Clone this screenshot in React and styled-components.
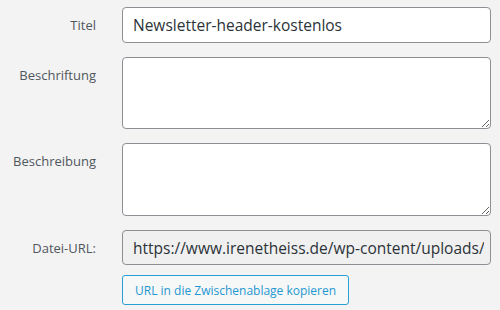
import React from "react";
import styled, { createGlobalStyle } from "styled-components";

const GlobalStyle = createGlobalStyle`
  * {
    box-sizing: border-box;
  }
  body {
    margin: 0;
    background: #f3f3f3;
    font-family: "Open Sans", "Noto Sans", Arial, sans-serif;
  }
`;

const Form = styled.form`
  display: grid;
  grid-template-columns: 96px 1fr;
  column-gap: 26px;
  row-gap: 14px;
  padding: 7px 9px 0 0;
`;

const Label = styled.label`
  text-align: right;
  font-size: 13px;
  color: #50575e;
  align-self: ${props => (props.top ? "start" : "center")};
  padding-top: ${props => (props.top ? "9px" : "0")};
`;

const TextInput = styled.input`
  width: 100%;
  height: ${props => (props.h || 36)}px;
  padding: ${props => (props.readOnly ? "0 6px 0 10px" : "0 10px")};
  font-family: inherit;
  font-size: 15.5px;
  color: #2c3338;
  background: ${props => (props.readOnly ? "#f0f0f1" : "#fff")};
  border: 1px solid #8c8f94;
  border-radius: 4px;
  outline: none;
  min-width: 0;
`;

const TextArea = styled.textarea`
  width: 100%;
  height: ${props => props.h}px;
  padding: 6px 10px;
  font-family: inherit;
  font-size: 15px;
  color: #2c3338;
  background: #fff;
  border: 1px solid #8c8f94;
  border-radius: 4px;
  outline: none;
  resize: vertical;
  display: block;
`;

const Actions = styled.div`
  grid-column: 2;
  margin-top: -4px;
`;

const CopyButton = styled.button`
  height: 30px;
  padding: 0 12px;
  font-family: inherit;
  font-size: 12px;
  color: #1f97d2;
  background: #f6f7f7;
  border: 1px solid #2a9fd6;
  border-radius: 3px;
  cursor: pointer;
`;

export default function App() {
  return (
    <>
      <GlobalStyle />
      <Form onSubmit={e => e.preventDefault()}>
        <Label htmlFor="title">Titel</Label>
        <TextInput id="title" defaultValue="Newsletter-header-kostenlos" />

        <Label htmlFor="caption" top>
          Beschriftung
        </Label>
        <TextArea id="caption" h={72} />

        <Label htmlFor="description" top>
          Beschreibung
        </Label>
        <TextArea id="description" h={73} />

        <Label htmlFor="url">Datei-URL:</Label>
        <TextInput
          id="url"
          h={35}
          readOnly
          value="https://www.irenetheiss.de/wp-content/uploads/2019/06/Newsletter-header-kostenlos.png"
        />

        <Actions>
          <CopyButton type="button">URL in die Zwischenablage kopieren</CopyButton>
        </Actions>
      </Form>
    </>
  );
}
